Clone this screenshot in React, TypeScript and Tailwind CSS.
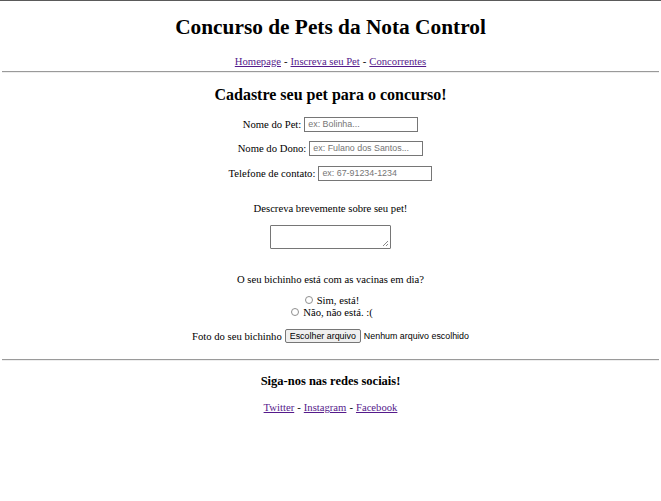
export default function App() {
  const link = 'text-[#551a8b] underline';

  return (
    <div className="min-h-[501px] bg-white border-t border-[#5a5a5a] font-['Liberation_Serif',serif] text-black text-[10.67px] leading-[12px] text-center">
      {/* Header */}
      <h1 className="pt-[14px] h-[38px] flex items-center justify-center text-[21.33px] font-bold">
        Concurso de Pets da Nota Control
      </h1>
      <p className="mt-[16px] h-[12px] flex items-center justify-center gap-[3px]">
        <a className={link}>Homepage</a> - <a className={link}>Inscreva seu Pet</a> -{' '}
        <a className={link}>Concorrentes</a>
      </p>
      <hr className="mt-[4px] mx-[2px] h-[2px] border-t border-b border-t-[#9a9a9a] border-b-[#eeeeee]" />

      {/* Form */}
      <form>
        <h2 className="mt-[13px] h-[18px] flex items-center justify-center text-[16px] font-bold">
          Cadastre seu pet para o concurso!
        </h2>
        <Field label="Nome do Pet:" placeholder="ex: Bolinha..." className="mt-[12px]" />
        <Field label="Nome do Dono:" placeholder="ex: Fulano dos Santos..." className="mt-[8px]" />
        <Field label="Telefone de contato:" placeholder="ex: 67-91234-1234" className="mt-[9px]" />

        <p className="mt-[21px] h-[12px] flex items-center justify-center">
          Descreva brevemente sobre seu pet!
        </p>
        <div className="mt-[11px] flex justify-center">
          <div className="relative w-[121px] h-[24px] border border-[#767676] rounded-[1px]">
            <svg className="absolute right-[1px] bottom-[1px]" width="7" height="7" viewBox="0 0 7 7">
              <path d="M1 6 L6 1 M4 6 L6 4" stroke="#6b6b6b" strokeWidth="0.8" />
            </svg>
          </div>
        </div>

        <p className="mt-[24px] h-[12px] flex items-center justify-center">
          O seu bichinho está com as vacinas em dia?
        </p>
        <Radio label="Sim, está!" className="mt-[9px]" />
        <Radio label="Não, não está. :(" />

        <div className="mt-[11px] h-[14px] flex items-center justify-center">
          <span>Foto do seu bichinho</span>
          <span className="ml-[3px] h-[14px] px-[4px] flex items-center bg-[#efefef] border border-[#767676] rounded-[2px] font-['Liberation_Sans',sans-serif] text-[8.9px]">
            Escolher arquivo
          </span>
          <span className="ml-[3px] font-['Liberation_Sans',sans-serif] text-[8.9px]">Nenhum arquivo escolhido</span>
        </div>
      </form>

      <hr className="mt-[16px] mx-[2px] h-[2px] border-t border-b border-t-[#9a9a9a] border-b-[#eeeeee]" />

      {/* Footer */}
      <h3 className="mt-[13px] h-[14px] flex items-center justify-center text-[12.5px] font-bold">
        Siga-nos nas redes sociais!
      </h3>
      <p className="mt-[13px] h-[12px] flex items-center justify-center gap-[3px]">
        <a className={link}>Twitter</a> - <a className={link}>Instagram</a> - <a className={link}>Facebook</a>
      </p>
    </div>
  );
}

function Field({ label, placeholder, className }: { label: string; placeholder: string; className?: string }) {
  return (
    <div className={`h-[16px] flex items-center justify-center ${className ?? ''}`}>
      <span>{label}</span>
      <span className="ml-[3px] w-[114px] h-[15px] px-[3px] flex items-center text-left border border-[#767676] font-['Liberation_Sans',sans-serif] text-[8.9px] text-[#757575]">
        {placeholder}
      </span>
    </div>
  );
}

function Radio({ label, className }: { label: string; className?: string }) {
  return (
    <div className={`h-[12px] flex items-center justify-center ${className ?? ''}`}>
      <span className="w-[8px] h-[8px] rounded-full border border-[#8f8f8f] ml-[3px] mr-[4px]" />
      <span>{label}</span>
    </div>
  );
}
